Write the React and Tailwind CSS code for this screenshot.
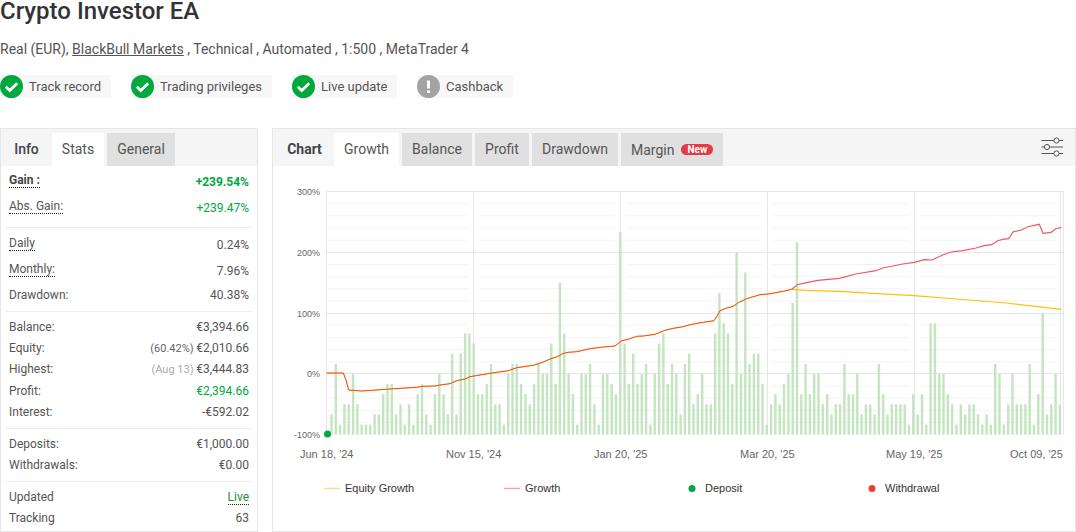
const bars = [
  2, 7, 1, 3, 3, 6, 3, 1, 1, 1, 2, 2, 4, 5, 5, 2, 3, 1, 3, 1, 4, 5, 2, 1, 4, 6, 4, 2, 8, 2, 8, 10, 10, 9, 4, 4, 5, 7, 3, 3, 1, 6, 7, 7, 5, 4, 3, 5, 7, 6, 6,
  9, 5, 15, 10, 6, 4, 1, 6, 6, 7, 3, 1, 6, 6, 5, 4, 20, 9, 5, 8, 5, 6, 7, 1, 6, 9, 10, 5, 7, 6, 2, 7, 8, 3, 4, 6, 3, 3, 10, 14, 11, 10, 5, 18, 6, 16, 7, 8, 8, 5, 1, 3, 4, 3, 5, 6, 13, 19, 4,
  7, 4, 6, 6, 3, 4, 2, 3, 3, 7, 4, 4, 6, 2, 3, 3, 2, 7, 4, 2, 3, 3, 3, 3, 1, 4, 2, 4, 1, 11, 11, 6, 6, 4, 3, 1, 3, 2, 3, 3, 2, 1, 2, 1, 7, 6, 1, 3, 6, 3, 3, 3, 7, 1, 4, 12, 2, 3, 6, 3,
];

const z6 = [[110,579],[160,579],[168,600],[176,630],[215,633],[260,630],[300,627],[380,622],[400,619],[435,618],[450,615],[480,611],[500,602],[525,597],[540,590],[570,585],[600,580],[655,572],[680,563],[730,556],[760,546],[780,537]];
const z7 = [[20,531],[38,521],[55,517],[80,515],[120,506],[160,501],[195,498],[215,482],[235,478],[260,469],[280,468],[315,463],[345,451],[370,445],[395,441],[420,434],[460,427],[492,422],[500,410],[510,392],[530,384],[550,379],[565,368],[590,356],[630,344],[655,342],[700,334],[725,328]];
const z7b = [[725,328],[742,314],[770,308]];
const z8 = [[35,301],[100,295],[150,282],[210,272],[230,264],[290,252],[325,247],[355,239],[378,240],[410,225],[435,216],[470,212],[510,204],[535,197],[557,194],[575,182],[590,178],[608,176],[622,155],[645,151],[665,140],[700,133],[711,160],[735,157],[750,146],[766,142]];

const toPts = (pts, ox) => pts.map(([x, y]) => `${(ox + x / 3).toFixed(1)},${(180 + y / 3).toFixed(1)}`).join(" ");
const sharedLine = toPts(z6, 290) + " " + toPts(z7, 550);
const growthTail = toPts(z7b, 550) + " " + toPts(z8, 806);
const equityTail = toPts([[725,328],[770,331]], 550) + " " + toPts([[100,334],[200,340],[325,347],[450,357],[600,369],[766,388]], 806);

const majorY = [191.5, 252.5, 313.5, 373.5];
const minorY = [];
for (let i = 0; i < 20; i++) {
  if (i % 5 !== 0) minorY.push(191.5 + i * 12.16);
}
const vLines = [473.5, 620.5, 767.5, 914.5];

function GrowthChart() {
  return (
    <svg viewBox="273 166 802 365" className="block w-[802px] h-[365px] font-['Liberation_Sans',sans-serif]">
      {minorY.map((y) => (
        <path key={y} d={`M328 ${y}H468M479 ${y}H615M626 ${y}H762M773 ${y}H909M920 ${y}H1056`} stroke="#f3f3f3" fill="none" />
      ))}
      {majorY.map((y) => (
        <line key={y} x1="326" x2="1063" y1={y} y2={y} stroke="#e6e6e6" />
      ))}
      {vLines.map((x) => (
        <line key={x} x1={x} x2={x} y1="191" y2="435" stroke="#e6e6e6" />
      ))}
      <line x1="326.5" x2="326.5" y1="191" y2="435" stroke="#e6e6e6" />
      <line x1="1060.5" x2="1060.5" y1="191" y2="435" stroke="#e6e6e6" />
      <line x1="1063.5" x2="1063.5" y1="191" y2="435" stroke="#e6e6e6" />

      {bars.map((n, i) => (
        <rect key={i} x={(330.3 + i * 4.31).toFixed(1)} y={(434.7 - n * 10.13).toFixed(1)} width="2.4" height={(n * 10.13).toFixed(1)} fill="#c4e5c0" />
      ))}

      <polyline points={sharedLine} fill="none" stroke="#ffc107" strokeWidth="0.8" />
      <polyline points={sharedLine} fill="none" stroke="#f4491e" strokeWidth="1" />
      <polyline points={equityTail} fill="none" stroke="#ffc107" strokeWidth="1.2" />
      <polyline points={growthTail} fill="none" stroke="#ee5a62" strokeWidth="1.2" />
      <circle cx="327.5" cy="434" r="3.5" fill="#00a83e" />

      <g fontSize="9" fill="#666" textAnchor="end">
        <text x="320" y="195">300%</text>
        <text x="320" y="256">200%</text>
        <text x="320" y="317">100%</text>
        <text x="320" y="377">0%</text>
        <text x="320" y="438">-100%</text>
      </g>
      <g fontSize="11" fill="#666">
        <text x="300" y="458">Jun 18, '24</text>
        <text x="446" y="458">Nov 15, '24</text>
        <text x="594" y="458">Jan 20, '25</text>
        <text x="740" y="458">Mar 20, '25</text>
        <text x="886" y="458">May 19, '25</text>
        <text x="1010" y="458">Oct 09, '25</text>
      </g>
      <g fontSize="11" fill="#333">
        <text x="345" y="492">Equity Growth</text>
        <text x="525" y="492">Growth</text>
        <text x="705" y="492">Deposit</text>
        <text x="885" y="492">Withdrawal</text>
      </g>
      <line x1="324" x2="340" y1="488.5" y2="488.5" stroke="#ffdf80" strokeWidth="1.5" />
      <line x1="504" x2="520" y1="488.5" y2="488.5" stroke="#f9a3a3" strokeWidth="1.5" />
      <circle cx="692" cy="488.5" r="3.5" fill="#00a83e" />
      <circle cx="872" cy="488.5" r="3.5" fill="#ee3e36" />
    </svg>
  );
}

function BadgeIcon({ ok }) {
  return (
    <svg viewBox="0 0 23 23" className="w-[23px] h-[23px] shrink-0">
      <circle cx="11.5" cy="11.5" r="11.5" fill={ok ? "#00a83e" : "#a3a3a3"} />
      {ok ? (
        <path d="M5.8 11.8l3.9 3.7 7.5-7.3" fill="none" stroke="#fff" strokeWidth="2.8" />
      ) : (
        <path d="M11.5 5.5v8M11.5 15.5v2.6" fill="none" stroke="#fff" strokeWidth="3" />
      )}
    </svg>
  );
}

function Badge({ ok, label, className }) {
  return (
    <div className={`flex items-center h-[23px] bg-[#f7f7f7] ${className}`}>
      <BadgeIcon ok={ok} />
      <span className="ml-[6px] whitespace-nowrap text-[13px] text-[#555]">{label}</span>
    </div>
  );
}

function Row({ label, value, dotted, note, height = "h-[21.3px]", labelClass = "", valueClass = "" }) {
  return (
    <div className={`flex items-center justify-between ${height}`}>
      <span className={dotted ? `leading-[14px] mb-[4px] border-b border-dotted border-[#222] ${labelClass}` : labelClass}>{label}</span>
      <span className={valueClass}>
        {note}
        {value}
      </span>
    </div>
  );
}

export default function App() {
  return (
    <div className="h-[532px] w-[1076px] overflow-hidden bg-white font-[Roboto,sans-serif] text-[#555]">
      <h1 className="h-[24px] text-[24px] leading-[22px] font-medium text-[#333]">Crypto Investor EA</h1>
      <p className="mt-[15px] h-[20px] text-[14px] leading-[20px]">
        Real (EUR), <a className="underline text-[#555]">BlackBull Markets</a> , Technical , Automated , 1:500 , MetaTrader 4
      </p>
      <div className="mt-[16px] flex">
        <Badge ok label="Track record" className="w-[111px]" />
        <Badge ok label="Trading privileges" className="ml-[20px] w-[141px]" />
        <Badge ok label="Live update" className="ml-[20px] w-[105px]" />
        <Badge label="Cashback" className="ml-[20px] w-[96px]" />
      </div>

      <div className="mt-[30px] flex items-start">
        <div className="w-[258px] h-[404px] border border-[#e6e6e6] text-[12px]">
          <div className="flex h-[37px] pt-[4px] bg-[#f5f5f5] text-[14px] leading-[32px]">
            <div className="w-[51px] text-center font-medium text-[#444]">Info</div>
            <div className="w-[52px] text-center bg-white">Stats</div>
            <div className="ml-[3px] w-[68px] text-center bg-[#e0e0e0]">General</div>
          </div>
          <div className="px-[5px]">
            <div className="px-[3px] pt-[3px] h-[62px] border-b border-[#ececec]">
              <Row dotted height="h-[26px]" label="Gain :" value="+239.54%" labelClass="font-bold text-[#444]" valueClass="font-bold text-[#00a83e]" />
              <Row dotted height="h-[26px]" label="Abs. Gain:" value="+239.47%" valueClass="text-[#00a83e]" />
            </div>
            <div className="px-[3px] h-[84px] border-b border-[#ececec] pt-[4px]">
              <Row dotted height="h-[26px]" label="Daily" value="0.24%" />
              <Row dotted height="h-[26px]" label="Monthly:" value="7.96%" />
              <Row height="h-[22px]" label="Drawdown:" value="40.38%" />
            </div>
            <div className="px-[3px] h-[117px] border-b border-[#ececec] pt-[4px]">
              <Row label="Balance:" value="€3,394.66" />
              <Row label="Equity:" note={<span className="text-[11px] text-[#666]">(60.42%) </span>} value="€2,010.66" />
              <Row label="Highest:" note={<span className="text-[11px] text-[#aaa]">(Aug 13) </span>} value="€3,444.83" />
              <Row label="Profit:" value="€2,394.66" valueClass="text-[#00a83e]" />
              <Row label="Interest:" value="-€592.02" />
            </div>
            <div className="px-[3px] h-[53px] border-b border-[#ececec] pt-[4px]">
              <Row label="Deposits:" value="€1,000.00" />
              <Row label="Withdrawals:" value="€0.00" />
            </div>
            <div className="px-[3px] pt-[4px]">
              <Row label="Updated" value={<span className="leading-[14px] inline-block border-b border-dotted border-[#222] text-[#1f8f2f]">Live</span>} />
              <Row label="Tracking" value="63" />
            </div>
          </div>
        </div>

        <div className="ml-[14px] w-[804px] h-[404px] border border-[#e6e6e6]">
          <div className="flex h-[37px] pt-[4px] bg-[#f5f5f5] text-[14px] leading-[32px]">
            <div className="w-[61px] pl-[2px] text-center font-bold text-[#444]">Chart</div>
            <div className="w-[65px] text-center bg-white">Growth</div>
            <div className="ml-[3px] w-[70px] text-center bg-[#e0e0e0]">Balance</div>
            <div className="ml-[3px] w-[54px] text-center bg-[#e0e0e0]">Profit</div>
            <div className="ml-[3px] w-[86px] text-center bg-[#e0e0e0]">Drawdown</div>
            <div className="ml-[3px] w-[102px] flex items-center pl-[10px] bg-[#e0e0e0]">
              Margin
              <span className="ml-[7px] w-[32px] h-[11px] rounded-full bg-[#e63946] text-white text-[10px] leading-[11px] font-bold text-center">New</span>
            </div>
            <svg viewBox="0 0 22 20" className="ml-auto mr-[12px] mt-[4px] w-[22px] h-[20px]" fill="none" stroke="#555">
              <path d="M0.5 3.5H22M0.5 10H22M0.5 16.5H22" />
              <circle cx="15.5" cy="3.5" r="2.6" fill="#f5f5f5" />
              <circle cx="6" cy="10" r="2.6" fill="#f5f5f5" />
              <circle cx="15.5" cy="16.5" r="2.6" fill="#f5f5f5" />
            </svg>
          </div>
          <GrowthChart />
        </div>
      </div>
    </div>
  );
}
